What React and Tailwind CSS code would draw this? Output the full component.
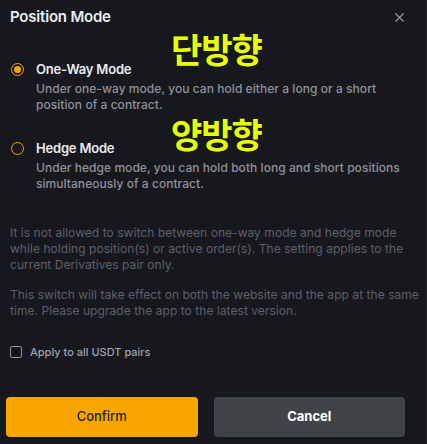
import React from 'react';
import { X } from 'lucide-react';

const modes = [
  {
    title: 'One-Way Mode',
    lines: ['Under one-way mode, you can hold either a long or a short', 'position of a contract.'],
    checked: true,
  },
  {
    title: 'Hedge Mode',
    lines: ['Under hedge mode, you can hold both long and short positions', 'simultaneously of a contract.'],
    checked: false,
  },
];

const notes = [
  [
    'It is not allowed to switch between one-way mode and hedge mode',
    'while holding position(s) or active order(s). The setting applies to the',
    'current Derivatives pair only.',
  ],
  [
    'This switch will take effect on both the website and the app at the same',
    'time. Please upgrade the app to the latest version.',
  ],
];

const Radio = ({ checked }) => (
  <span className="mt-[3px] flex h-[13px] w-[13px] shrink-0 items-center justify-center rounded-full border-[1.5px] border-[#f7a600]">
    {checked && <span className="h-[7px] w-[7px] rounded-full bg-[#f7a600]" />}
  </span>
);

const App = () => {
  return (
    <div className="relative h-[444px] w-[427px] overflow-hidden bg-[#17181e] font-['Inter','Noto_Sans_CJK_KR',sans-serif] text-[#eaecef]">
      {/* annotations */}
      <div className="absolute left-[171px] top-[27px] text-[34px] font-bold leading-[44px] tracking-[-1px] text-[#e8ff00] font-['Noto_Sans_CJK_KR',sans-serif]">단방향</div>
      <div className="absolute left-[171px] top-[112px] text-[34px] font-bold leading-[44px] tracking-[-1px] text-[#e8ff00] font-['Noto_Sans_CJK_KR',sans-serif]">양방향</div>

      <div className="flex items-center justify-between pl-[10px] pr-[20px] pt-[7px]">
        <h1 className="text-[15px] font-semibold leading-[20px] tracking-[-0.2px]">Position Mode</h1>
        <X className="h-[15px] w-[15px] text-[#9a9ca3]" strokeWidth={1.8} />
      </div>

      <div className="mt-[33px] flex flex-col gap-[26px] pl-[11px] pr-[10px]">
        {modes.map((m) => (
          <div key={m.title} className="flex gap-[12px]">
            <Radio checked={m.checked} />
            <div>
              <div className="text-[13px] font-semibold leading-[18px] tracking-[-0.2px]">{m.title}</div>
              <p className="mt-[3px] whitespace-nowrap text-[12px] font-medium leading-[16px] tracking-[0.05px] text-[#8f9198]">
                {m.lines[0]}
                <br />
                {m.lines[1]}
              </p>
            </div>
          </div>
        ))}
      </div>

      <div className="mt-[33px] flex flex-col gap-[14px] pl-[10px] text-[12px] leading-[16px] tracking-[0.05px] text-[#5d5f66]">
        {notes.map((lines, i) => (
          <p key={i} className="whitespace-nowrap">
            {lines.map((l, j) => (
              <React.Fragment key={j}>
                {j > 0 && <br />}
                {l}
              </React.Fragment>
            ))}
          </p>
        ))}
      </div>

      <label className="mt-[25px] flex items-center gap-[8px] pl-[10px]">
        <span className="h-[12px] w-[12px] rounded-[2px] border border-[#8f9198]" />
        <span className="text-[11px] font-medium leading-[16px] text-[#9fa1a8]">Apply to all USDT pairs</span>
      </label>

      <div className="mt-[37px] grid grid-cols-2 gap-[16px] pl-[6px] pr-[22px]">
        <button className="h-[40px] rounded-[4px] bg-[#f7a600] text-[13px] font-medium text-[#2b2106]">Confirm</button>
        <button className="h-[40px] rounded-[4px] bg-[#404347] text-[13px] font-bold text-white">Cancel</button>
      </div>

      <div className="absolute right-0 top-0 h-full w-[1px] bg-[#26282e]" />
    </div>
  );
};

export default App;
